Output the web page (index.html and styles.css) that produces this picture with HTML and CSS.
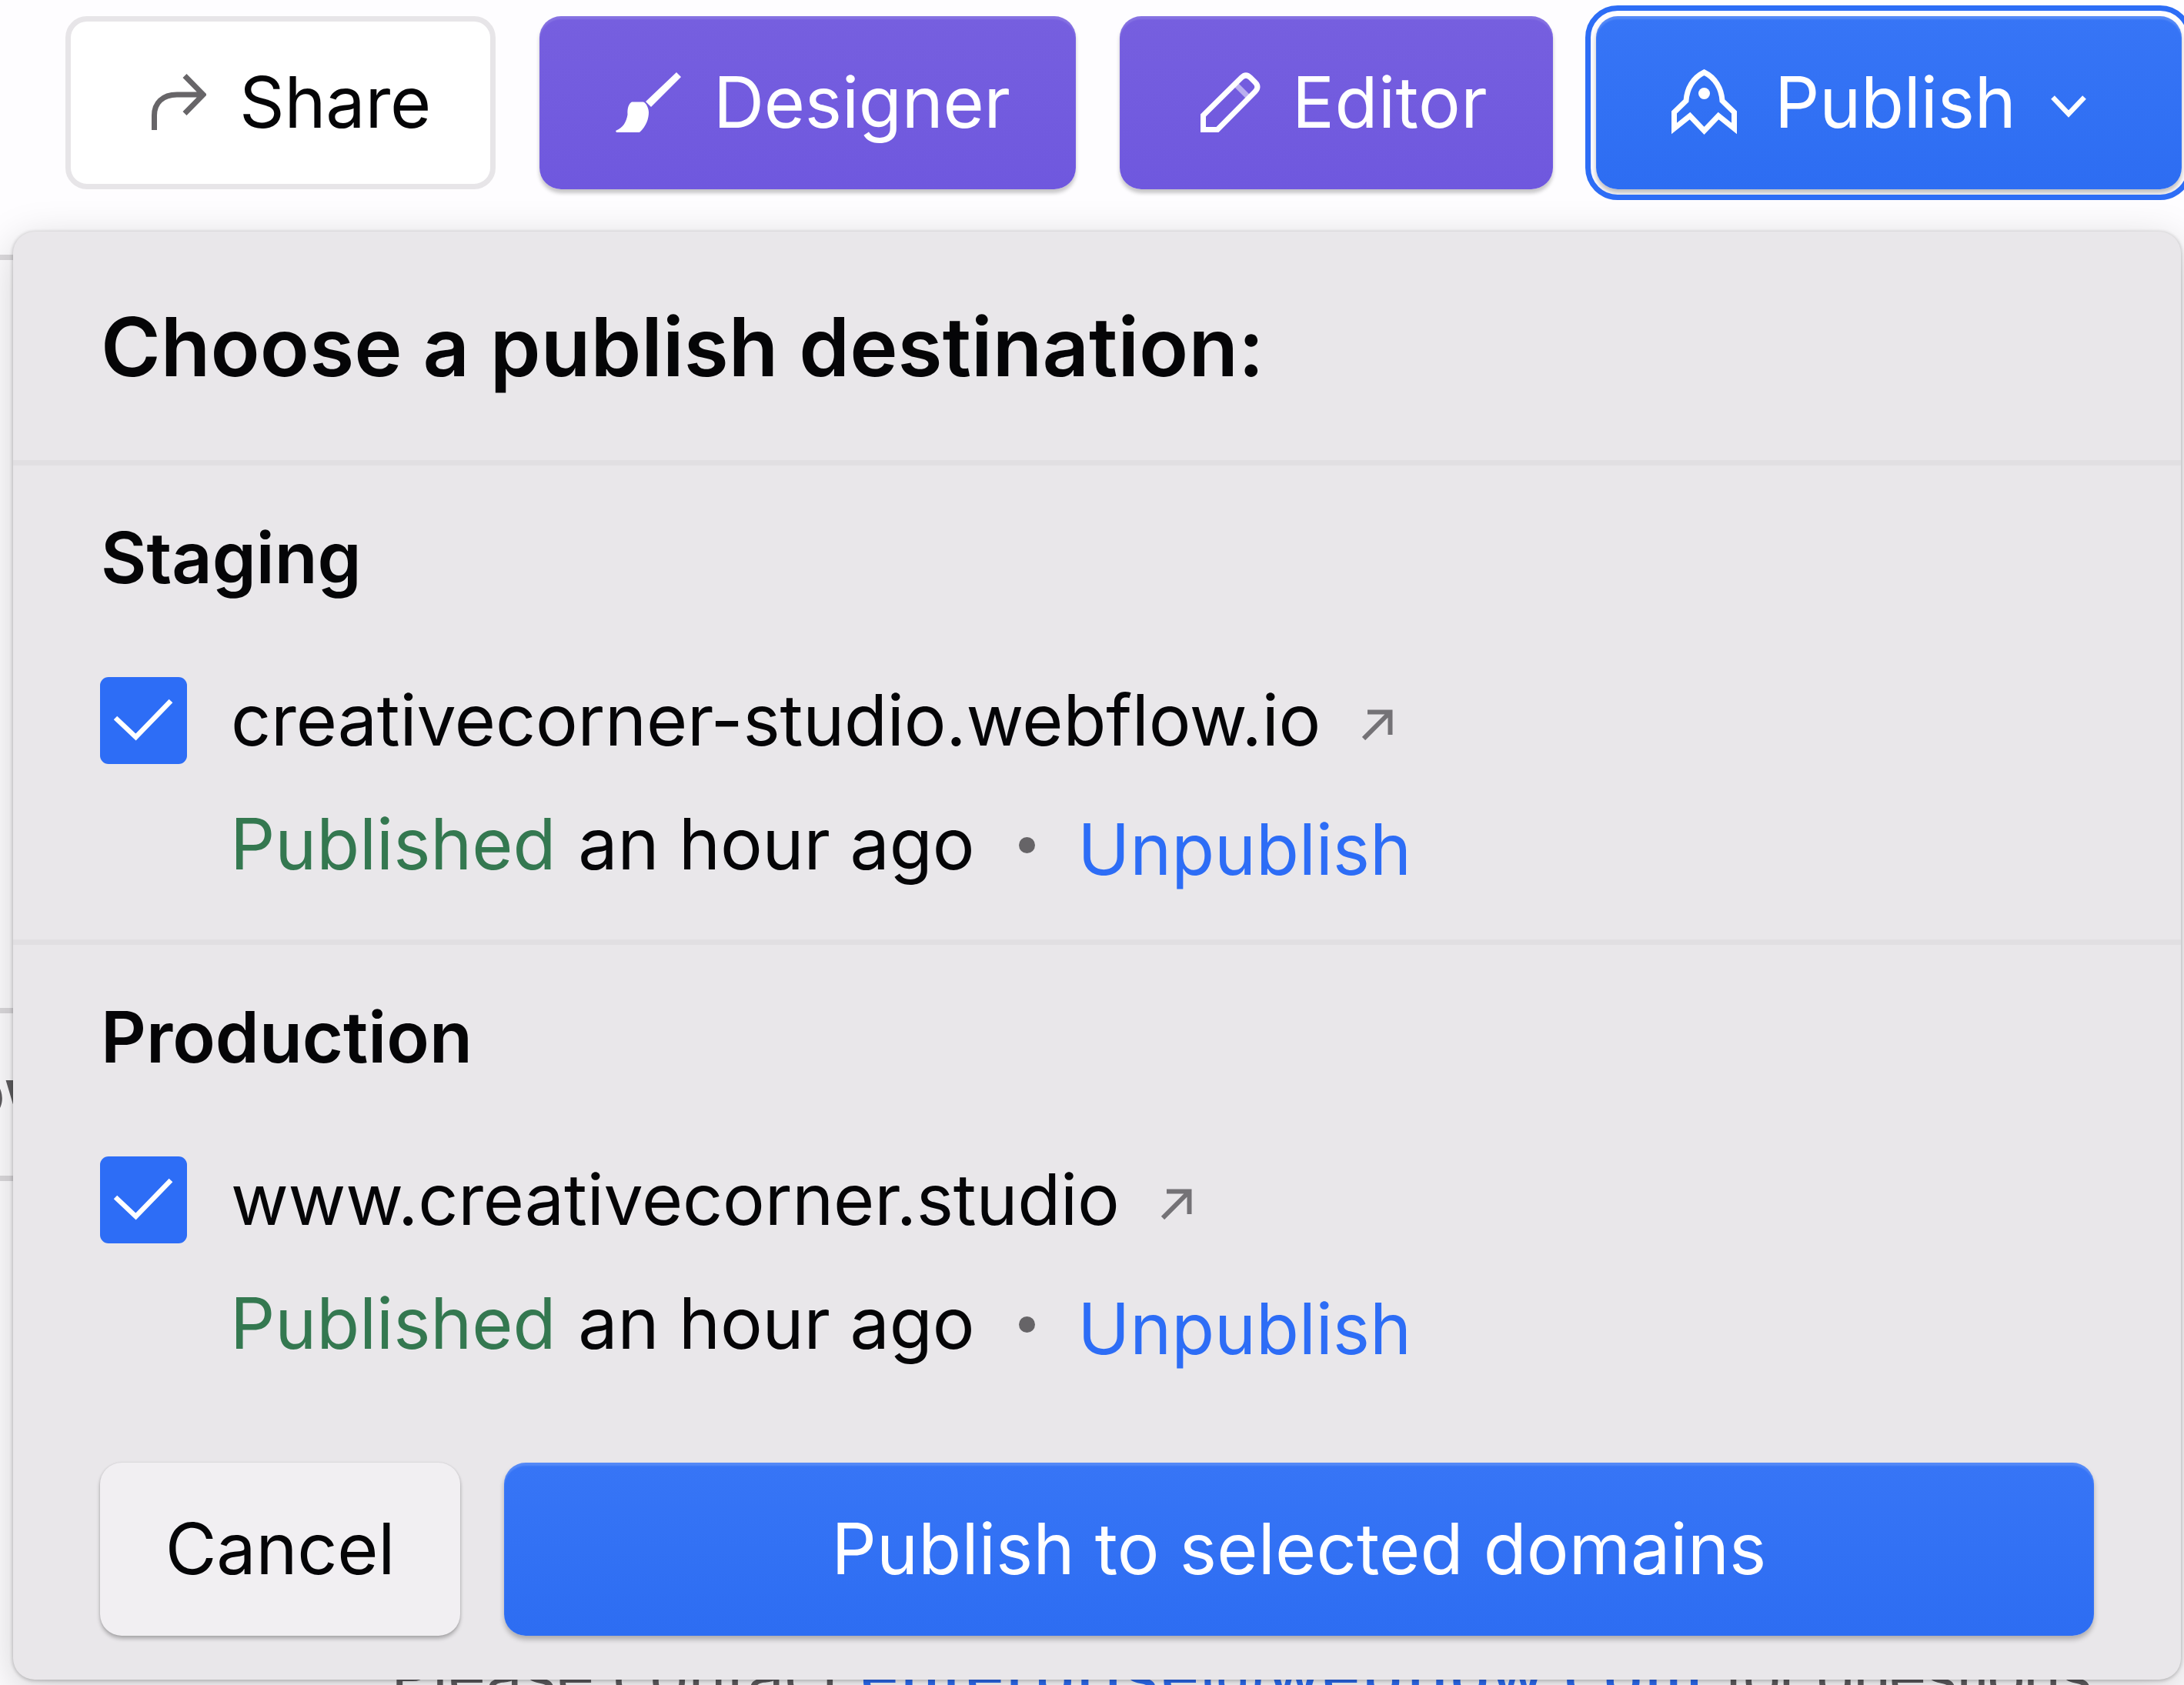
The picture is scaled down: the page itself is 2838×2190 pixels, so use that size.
FILE: index.html
```html
<!DOCTYPE html>
<html lang="en">
<head>
    <meta charset="UTF-8">
    <meta name="viewport" content="width=device-width, initial-scale=1.0">
    <title>Publish</title>
    <link rel="stylesheet" href="styles.css">
</head>
<body>
    <header class="toolbar">
        <button class="btn btn-share">
            <svg class="icon-share" width="71" height="73" viewBox="0 0 71 73"><path d="M3.5 73V54C3.5 38 14 27 33 27H67M43 2.500L67 27L43 51.500" fill="none" stroke="#676568" stroke-width="7"/></svg>
            <span>Share</span>
        </button>
        <button class="btn btn-purple btn-designer">
            <svg class="icon-brush" width="85" height="78" viewBox="0 0 85 78"><path d="M79 0L85 6L46 45L39 38ZM0 76C10 72 14 64 15.500 55C15 46 17 41 21 38.500H36C40 40 43 47 43 52C43 60 40 70 31 78H1Z" fill="#fff"/></svg>
            <span>Designer</span>
        </button>
        <button class="btn btn-purple btn-editor">
            <svg class="icon-pencil" width="78" height="78" viewBox="0 0 78 78"><path d="M3.500 74.500V56L53 7Q59 1 65 7L71 13Q77 19 71 25L22 74.500Z" fill="none" stroke="#fff" stroke-width="7"/><path d="M46 16L61 31" stroke="#fff" stroke-opacity=".5" stroke-width="7"/></svg>
            <span>Editor</span>
        </button>
        <button class="btn btn-blue btn-publish">
            <svg class="icon-rocket" width="85" height="86" viewBox="0 0 85 86"><path d="M3.500 77V56L19 41C20 25 28 11 42.500 4C57 11 65 25 66 41L81.500 56V77L61 60.500L42.500 80L24 60.500Z" fill="none" stroke="#fff" stroke-width="7"/><circle cx="42.500" cy="31.500" r="7.500" fill="#fff"/></svg>
            <span>Publish</span>
            <svg class="icon-chevron" width="46" height="29" viewBox="0 0 46 29"><path d="M2.500 2.500L23 24L43.500 2.500" fill="none" stroke="#fff" stroke-width="6.500"/></svg>
        </button>
    </header>

    <main class="page">
        <div class="page-block block-plan"></div>
        <div class="page-block block-row"><span>ow</span></div>
        <div class="page-block block-contact">
            <p>Please contact <a>enterprise@webflow.com</a> <span class="contact-end">for questions</span></p>
        </div>
    </main>

    <div class="menu">
        <h1 class="menu-title">Choose a publish destination:</h1>

        <section class="target">
            <h2>Staging</h2>
            <div class="domain">
                <span class="checkbox"><svg width="113" height="113" viewBox="0 0 113 113"><path d="M20 53L46.500 78L92 31" fill="none" stroke="#fff" stroke-width="6.500"/></svg></span>
                <span class="domain-name">creativecorner-studio.webflow.io</span>
                <svg class="icon-out" width="40" height="40" viewBox="0 0 40 40"><path d="M2 38L36 4M7 3.500H36.500V33" fill="none" stroke="#747276" stroke-width="6"/></svg>
            </div>
            <div class="status">
                <span class="published">Published</span>
                <span class="ago">an hour ago</span>
                <span class="dot"></span>
                <a class="unpublish">Unpublish</a>
            </div>
        </section>

        <section class="target target-production">
            <h2>Production</h2>
            <div class="domain">
                <span class="checkbox"><svg width="113" height="113" viewBox="0 0 113 113"><path d="M20 53L46.500 78L92 31" fill="none" stroke="#fff" stroke-width="6.500"/></svg></span>
                <span class="domain-name">www.creativecorner.studio</span>
                <svg class="icon-out" width="40" height="40" viewBox="0 0 40 40"><path d="M2 38L36 4M7 3.500H36.500V33" fill="none" stroke="#747276" stroke-width="6"/></svg>
            </div>
            <div class="status">
                <span class="published">Published</span>
                <span class="ago">an hour ago</span>
                <span class="dot"></span>
                <a class="unpublish">Unpublish</a>
            </div>
        </section>

        <div class="actions">
            <button class="btn btn-cancel">Cancel</button>
            <button class="btn btn-blue btn-submit">Publish to selected domains</button>
        </div>
    </div>
</body>
</html>
```

FILE: styles.css
```css
* {
    box-sizing: border-box;
}

body {
    margin: 0;
    width: 2838px;
    height: 2190px;
    position: relative;
    overflow: hidden;
    background: #fefdff;
    color: #050507;
    font-family: Inter, sans-serif;
    font-size: 91.4px;
    line-height: 112px;
}

h1, h2, p {
    margin: 0;
}

/* top bar */
.toolbar {
    display: flex;
    height: 331px;
    padding: 21px 0 0 85px;
}

.btn {
    display: flex;
    align-items: center;
    flex: none;
    height: 225px;
    padding: 0 0 2px;
    border: none;
    border-radius: 28px;
    color: #fff;
    font: inherit;
    letter-spacing: -0.2px;
    white-space: nowrap;
}

.btn svg {
    flex: none;
}

.btn-share {
    width: 559px;
    margin-right: 57px;
    padding-left: 105px;
    border: 7px solid #e7e5e8;
    background: #fff;
    color: #050507;
}

.icon-share {
    margin-right: 43px;
}

.btn-purple {
    background: linear-gradient(#765fdf, #6f58de);
    box-shadow: inset 0 4px 2px rgba(255, 255, 255, 0.12), 0 5px 5px rgba(0, 0, 0, 0.22);
}

.btn-designer {
    width: 697px;
    margin-right: 57px;
    padding-left: 99px;
}

.icon-brush {
    margin-right: 42px;
}

.btn-editor {
    width: 563px;
    margin-right: 56px;
    padding-left: 105px;
    letter-spacing: 0.5px;
}

.icon-pencil {
    margin-right: 41px;
}

.btn-blue {
    background: linear-gradient(#3775f6, #2d6df2);
    box-shadow: inset 0 4px 2px rgba(255, 255, 255, 0.15), 0 5px 6px rgba(0, 0, 0, 0.25);
}

.btn-publish {
    width: 761px;
    padding-left: 98px;
    outline: 7px solid #2d6df6;
    outline-offset: 7px;
}

.icon-rocket {
    margin-right: 49px;
}

.icon-chevron {
    margin: 11px 0 0 45px;
}

/* page under the menu */
.page {
    width: 2780px;
}

.page-block {
    border-top: 7px solid #dcdadd;
}

.block-plan {
    height: 979px;
}

.block-row {
    height: 218px;
    padding-top: 47px;
    color: #5f5d60;
    font-size: 84px;
    font-weight: 500;
}

.block-row span {
    margin-left: -44px;
}

.block-contact {
    height: 662px;
    padding: 586px 0 0 508px;
    color: #5f5d60;
    font-size: 84px;
    white-space: nowrap;
}

.block-contact a {
    color: #2d6df6;
    font-weight: 500;
    letter-spacing: 0.037em;
}

.contact-end {
    letter-spacing: -0.04em;
}

/* publish menu */
.menu {
    position: absolute;
    top: 301px;
    left: 17px;
    width: 2817px;
    height: 1882px;
    border-radius: 28px;
    background: #e9e7ea;
    box-shadow: 0 1px 4px 1px rgba(0, 0, 0, 0.2), 0 14px 56px rgba(0, 0, 0, 0.18);
}

.menu-title {
    height: 304px;
    padding: 94px 0 0 114px;
    border-bottom: 7px solid #e1dfe2;
    font-size: 105.5px;
    font-weight: 600;
    letter-spacing: 0.1px;
}

.target {
    height: 623px;
    padding: 64px 113px 0;
    border-bottom: 7px solid #e1dfe2;
}

.target h2 {
    padding-left: 1px;
    font-size: 91.4px;
    font-weight: 600;
}

.domain {
    display: flex;
    align-items: center;
    margin-top: 99px;
    height: 113px;
}

.checkbox {
    width: 113px;
    height: 113px;
    margin-right: 57px;
    border-radius: 11px;
    background: #2d6df6;
}

.checkbox svg {
    display: block;
}

.domain-name {
    margin-top: -2px;
    letter-spacing: -0.2px;
}

.icon-out {
    margin: 10px 0 0 54px;
}

.status {
    display: flex;
    margin: 48px 0 0 169px;
    letter-spacing: -0.1px;
}

.published {
    margin-right: 29px;
    color: #347850;
}

.dot {
    width: 21px;
    height: 21px;
    margin: 47px 55px 0 58px;
    border-radius: 50%;
    background: #666467;
}

.unpublish {
    margin-top: 7px;
    color: #2d6df6;
}

.target-production {
    height: 673px;
    border-bottom: none;
}

.actions {
    display: flex;
    gap: 57px;
    padding: 0 113px;
}

.btn-cancel {
    width: 468px;
    justify-content: center;
    background: #f1eff2;
    box-shadow: 0 4px 5px rgba(0, 0, 0, 0.25), 0 0 3px rgba(0, 0, 0, 0.12);
    color: #050507;
}

.btn-submit {
    flex: 1;
    justify-content: center;
    letter-spacing: 0.2px;
}
```
